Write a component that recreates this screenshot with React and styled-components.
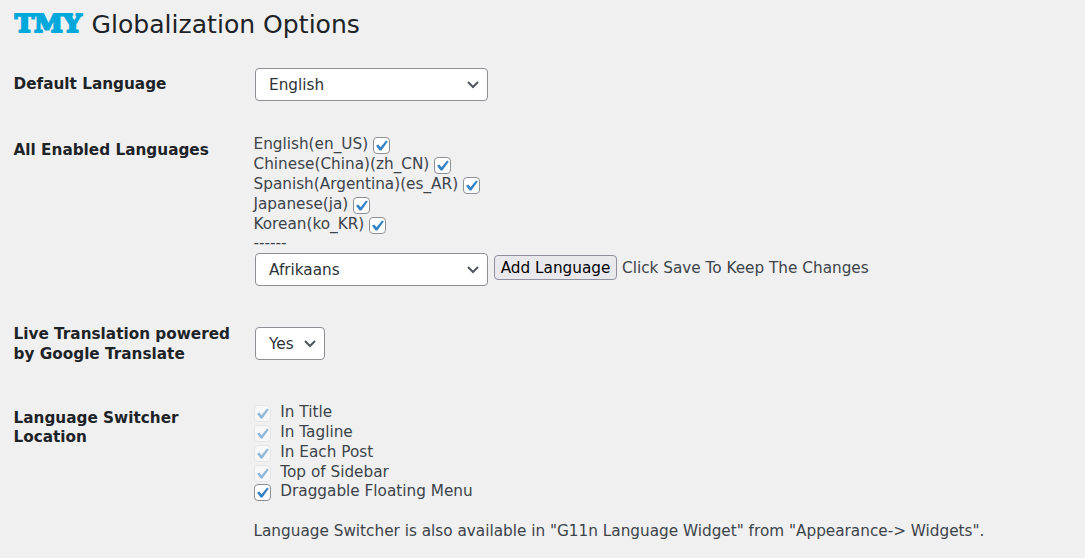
import React from "react";
import styled, { createGlobalStyle } from "styled-components";

const GlobalStyle = createGlobalStyle`
  * { box-sizing: border-box; }
  body {
    margin: 0;
    background: #f0f0f0;
    color: #3c434a;
    font-family: "DejaVu Sans", sans-serif;
    font-size: 15.27px;
    line-height: 19.8px;
  }
`;

const Page = styled.main`
  width: 1085px;
  height: 558px;
  overflow: hidden;
  padding-left: 13.5px;
`;

const Header = styled.header`
  display: flex;
  align-items: center;
  height: 48px;
  margin-bottom: 20px;
`;

const Logo = styled.svg`
  display: block;
  width: 70px;
  height: 24px;
  margin-right: 8px;
  overflow: visible;
`;

const Title = styled.h1`
  margin: 0;
  padding-top: 1px;
  color: #1d2327;
  font-size: 25.1px;
  font-weight: 400;
  line-height: 32px;
`;

const Row = styled.section`
  display: grid;
  grid-template-columns: 240px 1fr;
  height: ${(p) => p.$height}px;
`;

const Label = styled.h2`
  margin: ${(p) => p.$top}px 0 0;
  color: #1d2327;
  font-size: 15.27px;
  font-weight: 700;
  line-height: 19.8px;
`;

const Field = styled.div`
  white-space: nowrap;
`;

const SelectBox = styled.button`
  display: flex;
  align-items: center;
  justify-content: space-between;
  width: ${(p) => p.$width}px;
  height: 33px;
  margin: 0 0 0 1.5px;
  padding: 2px 8px 0 13px;
  border: 1px solid #8c8f94;
  border-radius: 4px;
  background: #fff;
  color: #2c3338;
  font: inherit;
`;

const Arrow = styled.svg`
  width: 12px;
  height: 8px;
  margin-bottom: 1px;
`;

const Line = styled.label`
  display: flex;
  height: 19.8px;
  padding-top: ${(p) => p.$top || 1.41}px;
  gap: ${(p) => p.$gap || 5}px;
`;

const Box = styled.span`
  flex: none;
  display: flex;
  align-items: center;
  justify-content: center;
  width: 17px;
  height: 17px;
  margin-top: 2.05px;
  border: 1px solid #8c8f94;
  border-radius: 4px;
  background: #fff;
  opacity: ${(p) => (p.$disabled ? 0.5 : 1)};
  border-color: ${(p) => (p.$disabled ? "#dcdcde" : "#8c8f94")};
`;

const AddRow = styled.div`
  display: flex;
  align-items: flex-start;
  margin-top: 0.2px;
`;

const AddButton = styled.button`
  width: 123px;
  height: 25px;
  margin: 2px 5px 0 6px;
  padding: 2.6px 0 0;
  border: 1px solid #8f8f9d;
  border-radius: 4px;
  background: #e9e9ed;
  color: #000;
  font: inherit;
`;

const Hint = styled.span`
  padding-top: 5.8px;
`;

const Note = styled.p`
  margin: 20.6px 0 0;
`;

function Select({ width, children }) {
  return (
    <SelectBox $width={width} type="button">
      {children}
      <Arrow viewBox="0 0 12 8" fill="none">
        <path d="M1 1 L6 6 L11 1" stroke="#50575e" strokeWidth="2" />
      </Arrow>
    </SelectBox>
  );
}

function Checkbox({ disabled }) {
  return (
    <Box $disabled={disabled}>
      <svg width="15" height="15" viewBox="0 0 15 15">
        <path d="M2 7.8 L4.4 6.6 L6.5 9.2 L12.1 2.4 L13.8 3.6 L7.4 12.6 L5.6 12.6 Z" fill="#3582c4" />
      </svg>
    </Box>
  );
}

const languages = [
  "English(en_US)",
  "Chinese(China)(zh_CN)",
  "Spanish(Argentina)(es_AR)",
  "Japanese(ja)",
  "Korean(ko_KR)",
];

const locations = [
  ["In Title", true],
  ["In Tagline", true],
  ["In Each Post", true],
  ["Top of Sidebar", true],
  ["Draggable Floating Menu", false],
];

export default function App() {
  return (
    <Page>
      <GlobalStyle />
      <Header>
        <Logo viewBox="0 0 70 24">
          <text
            x="0.7"
            y="20.2"
            textLength="67"
            lengthAdjust="spacingAndGlyphs"
            fontFamily="DejaVu Serif, serif"
            fontWeight="700"
            fontSize="24.5"
            fill="#00a8dc"
            stroke="#00a8dc"
            strokeWidth="2"
            strokeLinejoin="round"
          >
            TMY
          </text>
        </Logo>
        <Title>Globalization Options</Title>
      </Header>
      <Row $height={66}>
        <Label $top={6.5}>Default Language</Label>
        <Field>
          <Select width={233}>English</Select>
        </Field>
      </Row>
      <Row $height={193}>
        <Label $top={6.5}>All Enabled Languages</Label>
        <Field>
          {languages.map((name) => (
            <Line key={name}>
              {name}
              <Checkbox />
            </Line>
          ))}
          <Line $top={1.2}>------</Line>
          <AddRow>
            <Select width={233}>Afrikaans</Select>
            <AddButton type="button">Add Language</AddButton>
            <Hint>Click Save To Keep The Changes</Hint>
          </AddRow>
        </Field>
      </Row>
      <Row $height={75}>
        <Label $top={-2.2}>
          Live Translation powered
          <br />
          by Google Translate
        </Label>
        <Field>
          <Select width={70}>Yes</Select>
        </Field>
      </Row>
      <Row $height={150}>
        <Label $top={6.6}>
          Language Switcher
          <br />
          Location
        </Label>
        <Field>
          {locations.map(([name, disabled]) => (
            <Line key={name} $gap={9.8} $top={1.2}>
              <Checkbox disabled={disabled} />
              {name}
            </Line>
          ))}
          <Note>
            Language Switcher is also available in "G11n Language Widget" from "Appearance-&gt; Widgets".
          </Note>
        </Field>
      </Row>
    </Page>
  );
}
